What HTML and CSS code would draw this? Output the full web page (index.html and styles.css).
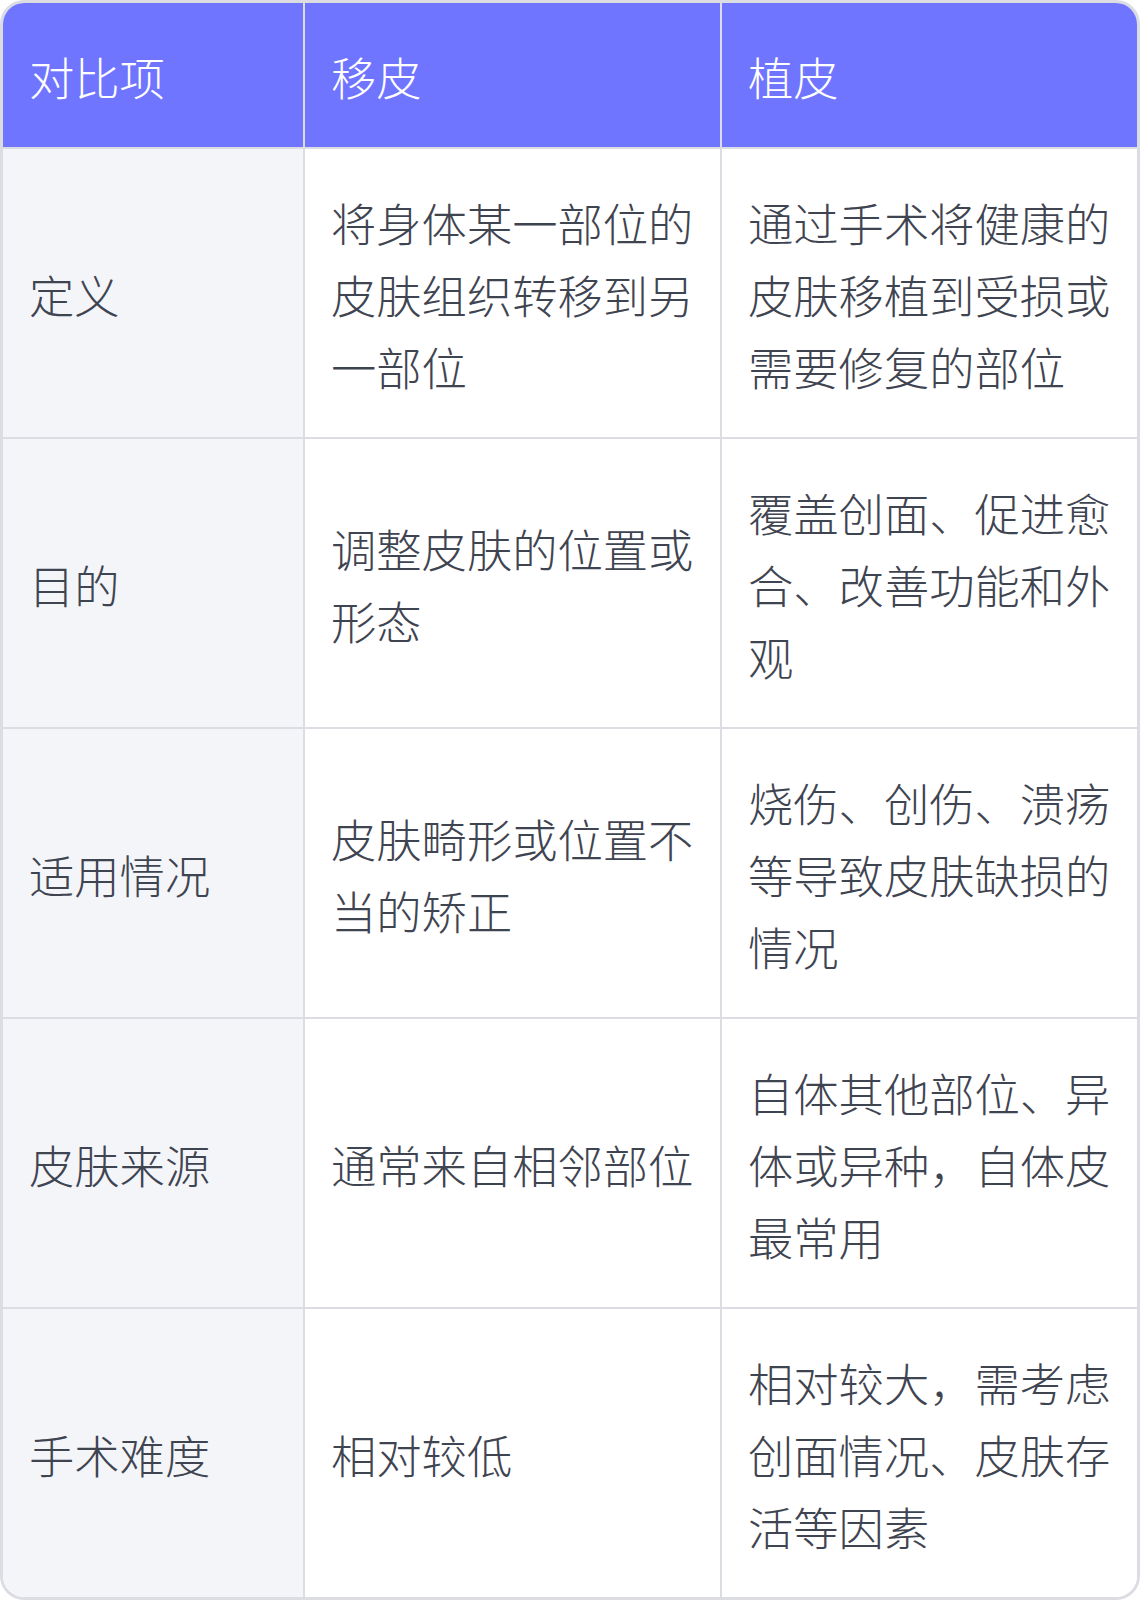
FILE: index.html
```html
<!DOCTYPE html>
<html lang="zh-CN">
<head>
    <meta charset="UTF-8">
    <meta name="viewport" content="width=device-width, initial-scale=1.0">
    <title>移皮与植皮对比</title>
    <link rel="stylesheet" href="styles.css">
</head>
<body>
    <div class="table-wrap">
        <table class="compare">
            <colgroup>
                <col class="col-item">
                <col class="col-a">
                <col class="col-b">
            </colgroup>
            <thead>
                <tr>
                    <th>对比项</th>
                    <th>移皮</th>
                    <th>植皮</th>
                </tr>
            </thead>
            <tbody>
                <tr>
                    <td>定义</td>
                    <td>将身体某一部位的皮肤组织转移到另一部位</td>
                    <td>通过手术将健康的皮肤移植到受损或需要修复的部位</td>
                </tr>
                <tr>
                    <td>目的</td>
                    <td>调整皮肤的位置或形态</td>
                    <td>覆盖创面、促进愈合、改善功能和外观</td>
                </tr>
                <tr>
                    <td>适用情况</td>
                    <td>皮肤畸形或位置不当的矫正</td>
                    <td>烧伤、创伤、溃疡等导致皮肤缺损的情况</td>
                </tr>
                <tr>
                    <td>皮肤来源</td>
                    <td>通常来自相邻部位</td>
                    <td>自体其他部位、异体或异种，自体皮最常用</td>
                </tr>
                <tr>
                    <td>手术难度</td>
                    <td>相对较低</td>
                    <td>相对较大，需考虑创面情况、皮肤存活等因素</td>
                </tr>
            </tbody>
        </table>
    </div>
</body>
</html>
```

FILE: styles.css
```css
body {
    margin: 0;
    background: #ffffff;
    font-family: "Noto Sans CJK SC", "Noto Sans", sans-serif;
}
.table-wrap {
    width: 1140px;
    box-sizing: border-box;
    border: 3px solid #dcdde3;
    border-radius: 24px;
    overflow: hidden;
}
.compare {
    width: 100%;
    border-collapse: collapse;
    table-layout: fixed;
}
.col-item {
    width: 301px;
}
.col-a {
    width: 417px;
}
.compare th,
.compare td {
    padding: 38.5px 20px 34.5px 26px;
    font-size: 45.3px;
    line-height: 71.68px;
    font-weight: 300;
    text-align: left;
    vertical-align: middle;
    border: 2px solid #dcdde3;
}
.compare thead th {
    padding-top: 38px;
    padding-bottom: 34px;
}
.compare tr > :first-child {
    border-left: none;
}
.compare tr > :last-child {
    border-right: none;
}
.compare thead th {
    border-top: none;
    background: #6f75ff;
    color: #ffffff;
}
.compare tbody tr:last-child td {
    border-bottom: none;
}
.compare td {
    color: #3f4451;
    background: #ffffff;
}
.compare td:first-child {
    background: #f4f5f9;
}
```
